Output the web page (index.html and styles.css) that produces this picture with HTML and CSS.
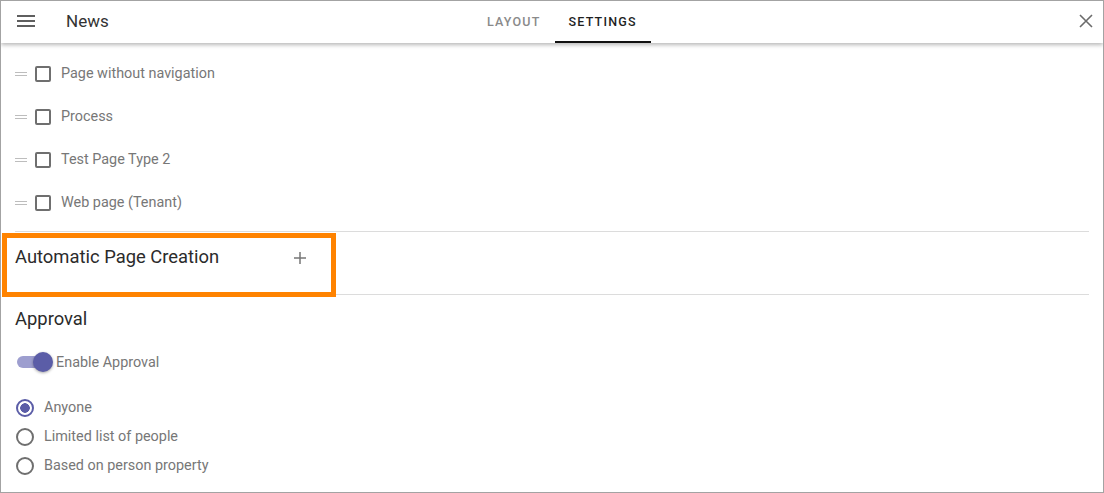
FILE: index.html
```html
<!DOCTYPE html>
<html lang="en">
<head>
<meta charset="utf-8">
<title>News – Settings</title>
<link rel="stylesheet" href="styles.css">
</head>
<body>
<div class="frame">
  <header class="topbar">
    <div class="brand">
      <button class="icon-btn menu" aria-label="Menu">
        <svg width="24" height="24" viewBox="0 0 24 24"><path d="M3 18h18v-2H3v2zm0-5h18v-2H3v2zm0-7v2h18V6H3z" fill="#5f5f5f"/></svg>
      </button>
      <span class="title">News</span>
    </div>
    <nav class="tabs">
      <div class="tab">LAYOUT</div>
      <div class="tab active">SETTINGS</div>
    </nav>
    <div class="spacer"></div>
    <button class="icon-btn close" aria-label="Close">
      <svg width="14" height="14" viewBox="0 0 14 14"><path d="M1 1L13 13M13 1L1 13" stroke="#6b6b6b" stroke-width="1.6" fill="none"/></svg>
    </button>
  </header>

  <main class="content">
    <ul class="types">
      <li class="type-row"><span class="handle"></span><span class="checkbox"></span><span class="label">Page without navigation</span></li>
      <li class="type-row"><span class="handle"></span><span class="checkbox"></span><span class="label">Process</span></li>
      <li class="type-row"><span class="handle"></span><span class="checkbox"></span><span class="label">Test Page Type 2</span></li>
      <li class="type-row"><span class="handle"></span><span class="checkbox"></span><span class="label">Web page (Tenant)</span></li>
    </ul>

    <div class="divider"></div>

    <section class="auto">
      <div class="section-head">
        <h2 class="heading">Automatic Page Creation</h2>
        <button class="icon-btn plus" aria-label="Add">
          <svg width="12" height="12" viewBox="0 0 12 12"><path d="M6 0V12M0 6H12" stroke="#777" stroke-width="1.5" fill="none"/></svg>
        </button>
      </div>
    </section>

    <div class="divider"></div>

    <section class="approval">
      <h2 class="heading">Approval</h2>
      <div class="toggle-row">
        <span class="toggle"><span class="track"></span><span class="thumb"></span></span>
        <span class="label">Enable Approval</span>
      </div>
      <ul class="radios">
        <li class="radio-row"><span class="radio checked"></span><span class="label">Anyone</span></li>
        <li class="radio-row"><span class="radio"></span><span class="label">Limited list of people</span></li>
        <li class="radio-row"><span class="radio"></span><span class="label">Based on person property</span></li>
      </ul>
    </section>

    <div class="highlight"></div>
  </main>
</div>
</body>
</html>
```

FILE: styles.css
```css
* { box-sizing: border-box; }
html, body { margin: 0; padding: 0; background: #fff; }
body { font-family: Roboto, "Noto Sans", Arial, sans-serif; }

.frame {
  position: relative;
  width: 1104px;
  height: 493px;
  border: 1px solid #a3a3a3;
  overflow: hidden;
  background: #fff;
}

.icon-btn {
  border: 0;
  padding: 0;
  margin: 0;
  background: none;
  display: flex;
  align-items: center;
  justify-content: center;
  cursor: pointer;
}

/* top bar */
.topbar {
  position: relative;
  z-index: 2;
  height: 42px;
  display: flex;
  align-items: stretch;
  background: #fff;
  box-shadow: 0 2px 4px rgba(0, 0, 0, 0.28);
}
.brand {
  flex: 0 0 472px;
  display: flex;
  align-items: center;
  padding-left: 13px;
  padding-bottom: 2px;
}
.menu { width: 24px; height: 24px; }
.title {
  margin-left: 28px;
  font-size: 17px;
  color: #333;
}
.tabs { display: flex; }
.tab {
  padding: 0 14px;
  display: flex;
  align-items: center;
  font-size: 12.5px;
  font-weight: 500;
  letter-spacing: 1.2px;
  color: #8a8a8a;
  border-bottom: 2px solid transparent;
}
.tab.active {
  color: #1f1f1f;
  border-bottom-color: #111;
}
.spacer { flex: 1; }
.close {
  width: 14px;
  margin-right: 10px;
  padding-bottom: 2px;
}

/* content */
.content { padding-top: 9px; }
.types { list-style: none; margin: 0; padding: 0; }
.type-row {
  height: 43px;
  display: flex;
  align-items: center;
  padding-left: 14px;
}
.handle {
  width: 12px;
  height: 4px;
  border-top: 1px solid #bdbdbd;
  border-bottom: 1px solid #bdbdbd;
  margin-right: 8px;
}
.checkbox {
  width: 16px;
  height: 16px;
  border: 2px solid #6f6f6f;
  border-radius: 2px;
  margin-right: 10px;
}
.label {
  font-size: 14.4px;
  color: #777;
}

.divider {
  height: 1px;
  background: #dcdcdc;
  margin: 7px 14px 0 14px;
}
.auto + .divider { margin-top: 0; }

.heading {
  margin: 0;
  font-size: 18.4px;
  font-weight: 400;
  line-height: 20px;
  color: #2b2b2b;
}

.auto {
  height: 62px;
  padding: 15px 0 0 14px;
}
.section-head {
  width: 292px;
  display: flex;
  align-items: center;
  justify-content: space-between;
}
.plus { width: 12px; height: 12px; margin-right: 1px; margin-top: 2px; }

.approval { padding: 14px 0 0 14px; }
.toggle-row {
  margin-top: 21px;
  height: 24px;
  display: flex;
  align-items: center;
}
.toggle {
  position: relative;
  width: 37px;
  height: 20px;
  margin-left: 1px;
  margin-right: 3px;
}
.track {
  position: absolute;
  left: 1px;
  top: 4px;
  width: 31px;
  height: 12px;
  border-radius: 6px;
  background: #9d9ecf;
}
.thumb {
  position: absolute;
  right: 0;
  top: 0;
  width: 20px;
  height: 20px;
  border-radius: 50%;
  background: #5b5da7;
  box-shadow: 0 1px 3px rgba(0, 0, 0, 0.35);
}

.radios { list-style: none; margin: 19px 0 0 0; padding: 0; }
.radio-row {
  height: 29px;
  display: flex;
  align-items: center;
  padding-left: 1px;
}
.radio {
  width: 18px;
  height: 18px;
  border: 2px solid #6f6f6f;
  border-radius: 50%;
  margin-right: 10px;
}
.radio.checked {
  border-color: #5b5da7;
  background: radial-gradient(circle, #5b5da7 0 4.5px, transparent 5px);
}

/* annotation overlay */
.highlight {
  position: absolute;
  left: 1px;
  top: 232px;
  width: 334px;
  height: 64px;
  border: 5px solid #ff8300;
  pointer-events: none;
}
```
